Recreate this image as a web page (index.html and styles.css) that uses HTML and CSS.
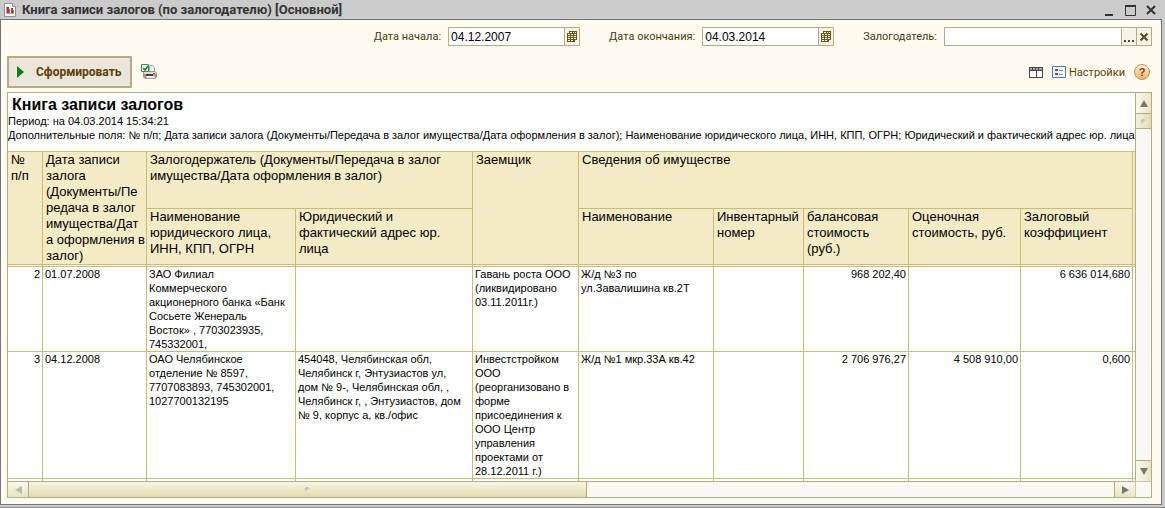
FILE: index.html
```html
<!DOCTYPE html>
<html lang="ru">
<head>
<meta charset="utf-8">
<title>Книга записи залогов</title>
<link rel="stylesheet" href="styles.css">
</head>
<body>
<div class="window">
  <header class="titlebar">
    <svg class="doc-icon" width="12" height="14" viewBox="0 0 12 14"><path d="M.5.5h8l3 3v10H.5z" fill="#fff" stroke="#7c96ae"/><path d="M8.500.5v3h3" fill="#dde6ee" stroke="#7c96ae"/><path d="M2 3h1v7H2zM2 10h8v1H2z" fill="#a8a8a8"/><path d="M3 4h2v6H3zM7 5h2v5H7z" fill="#d8281c"/><path d="M5 6h1v4H5zM9 7h1v3H9z" fill="#5ba04b"/></svg>
    <h1 class="title">Книга записи залогов (по залогодателю) [Основной]</h1>
    <div class="window-buttons">
      <button class="wbtn" aria-label="Свернуть"><svg width="12" height="12"><path d="M2 10h8v2H2z" fill="#333"/></svg></button>
      <button class="wbtn" aria-label="Развернуть"><svg width="12" height="12"><path d="M1.500 1.500h10v10h-10z" fill="none" stroke="#333"/><path d="M1 1h11v2H1z" fill="#333"/></svg></button>
      <button class="wbtn" aria-label="Закрыть"><svg width="12" height="12"><path d="M2 2l8 8M10 2l-8 8" stroke="#333" stroke-width="2"/></svg></button>
    </div>
  </header>
  <main class="client">
    <form class="filters">
      <div class="field">
        <label for="from">Дата начала:</label>
        <div class="combo date"><input id="from" type="text" value="04.12.2007"><button type="button" class="pick" aria-label="Календарь"><svg width="12" height="12"><path d="M3 0h8v9h-2v2H1V2h2z" fill="#735213"/><path d="M4 1h2v1H4zM7 1h1v1H7zM9 1h1v1H9zM2 3h2v1H2zM5 3h2v1H5zM8 3h2v1H8zM2 5h2v1H2zM5 5h2v1H5zM8 5h2v1H8zM2 7h2v1H2zM5 7h2v1H5zM8 7h2v1H8zM2 9h2v1H2zM5 9h2v1H5z" fill="#fff"/></svg></button></div>
      </div>
      <div class="field">
        <label for="to">Дата окончания:</label>
        <div class="combo date"><input id="to" type="text" value="04.03.2014"><button type="button" class="pick" aria-label="Календарь"><svg width="12" height="12"><path d="M3 0h8v9h-2v2H1V2h2z" fill="#735213"/><path d="M4 1h2v1H4zM7 1h1v1H7zM9 1h1v1H9zM2 3h2v1H2zM5 3h2v1H5zM8 3h2v1H8zM2 5h2v1H2zM5 5h2v1H5zM8 5h2v1H8zM2 7h2v1H2zM5 7h2v1H5zM8 7h2v1H8zM2 9h2v1H2zM5 9h2v1H5z" fill="#fff"/></svg></button></div>
      </div>
      <div class="field">
        <label for="pledger">Залогодатель:</label>
        <div class="combo pledger"><input id="pledger" type="text"><button type="button" class="pick" aria-label="Выбрать"><svg width="12" height="12"><path d="M1 9h2v2H1zM5 9h2v2H5zM9 9h2v2H9z" fill="#5c4513"/></svg></button><button type="button" class="pick" aria-label="Очистить"><svg width="12" height="12"><path d="M2.500 2.500l7 7M9.500 2.500l-7 7" stroke="#5c4513" stroke-width="2"/></svg></button></div>
      </div>
    </form>
    <div class="toolbar">
      <button class="run"><svg width="7" height="12"><path d="M0 0l7 6-7 6z" fill="#108010"/></svg>Сформировать</button>
      <button class="tool print" aria-label="Печать"><svg width="16" height="16"><path d="M8.500 1.500h3l2 2v4h-5z" fill="#eaf2fa" stroke="#8fa6bd"/><path d="M2 8l2-1h10l2 2v4l-2 2H4l-2-2z" fill="#a5978f"/><path d="M3 8h11l1 2H3z" fill="#e2d8cf"/><path d="M5 10h7v2H5z" fill="#463c38"/><path d="M5 12h8l1 2H6z" fill="#f4f4f4"/><path d="M12 9h2v1h-2z" fill="#e25a32"/><path d="M.5.5h7v7h-7z" fill="#fff" stroke="#458d45"/><path d="M2 4l2 2 3-4" fill="none" stroke="#188018" stroke-width="1.500"/></svg></button>
      <div class="tools-right">
        <button class="tool" aria-label="Таблица"><svg width="14" height="11"><path d="M0 0h14v11H0z" fill="#444"/><path d="M1 4h6v6H1zM8 4h5v6H8z" fill="#fff"/><path d="M1 1h2v2H1zM4 1h2v2H4zM7 1h2v2H7zM10 1h3v2h-3z" fill="#aaa"/></svg></button>
        <button class="tool settings"><svg width="14" height="12"><path d="M.5.5h13v11H.5z" fill="#f5f8ff" stroke="#5573b5"/><path d="M3 3h3v2H3zM3 7h3v2H3z" fill="#3d5ba5"/><path d="M7 4.500h4M7 8.500h4" stroke="#8493b5"/></svg>Настройки</button>
        <button class="help" aria-label="Справка">?</button>
      </div>
    </div>
    <section class="report">
      <div class="sheet">
        <div class="report-head">
          <h2>Книга записи залогов</h2>
          <p>Период: на 04.03.2014 15:34:21</p>
          <p>Дополнительные поля: № п/п; Дата записи залога (Документы/Передача в залог имущества/Дата оформления в залог); Наименование юридического лица, ИНН, КПП, ОГРН; Юридический и фактический адрес юр. лица</p>
        </div>
        <table class="grid">
          <colgroup><col class="c-num"><col class="c-date"><col class="c-name"><col class="c-addr"><col class="c-debtor"><col class="c-item"><col class="c-inv"><col class="c-bal"><col class="c-est"><col class="c-est"><col class="c-rest"></colgroup>
          <thead>
            <tr class="h-top">
              <th rowspan="2">№<br>п/п</th>
              <th rowspan="2">Дата записи<br>залога<br>(Документы/Пе<br>редача в залог<br>имущества/Дат<br>а оформления в<br>залог)</th>
              <th colspan="2">Залогодержатель (Документы/Передача в залог<br>имущества/Дата оформления в залог)</th>
              <th rowspan="2">Заемщик</th>
              <th colspan="5">Сведения об имуществе</th>
              <th rowspan="2"></th>
            </tr>
            <tr class="h-sub">
              <th>Наименование<br>юридического лица,<br>ИНН, КПП, ОГРН</th>
              <th>Юридический и<br>фактический адрес юр.<br>лица</th>
              <th>Наименование</th>
              <th>Инвентарный<br>номер</th>
              <th>балансовая<br>стоимость<br>(руб.)</th>
              <th>Оценочная<br>стоимость, руб.</th>
              <th>Залоговый<br>коэффициент</th>
            </tr>
            <tr class="strip"><td></td><td></td><td></td><td></td><td></td><td></td><td></td><td></td><td></td><td></td><td></td></tr>
          </thead>
          <tbody>
            <tr class="r-short">
              <td class="num">2</td><td>01.07.2008</td>
              <td>ЗАО Филиал<br>Коммерческого<br>акционерного банка «Банк<br>Сосьете Женераль<br>Восток» , 7703023935,<br>745332001,</td>
              <td></td><td>Гавань роста ООО<br>(ликвидировано<br>03.11.2011г.)</td><td>Ж/д №3 по<br>ул.Завалишина кв.2Т</td><td></td>
              <td class="num">968 202,40</td><td></td><td class="num">6 636 014,680</td><td></td>
            </tr>
            <tr class="r-tall">
              <td class="num">3</td><td>04.12.2008</td>
              <td>ОАО Челябинское<br>отделение № 8597,<br>7707083893, 745302001,<br>1027700132195</td>
              <td>454048, Челябинская обл,<br>Челябинск г, Энтузиастов ул,<br>дом № 9-, Челябинская обл, ,<br>Челябинск г, , Энтузиастов, дом<br>№ 9, корпус а, кв./офис</td>
              <td>Инвестстройком<br>ООО<br>(реорганизовано в<br>форме<br>присоединения к<br>ООО Центр<br>управления<br>проектами от<br>28.12.2011 г.)</td>
              <td>Ж/д №1 мкр.33А кв.42</td><td></td>
              <td class="num">2 706 976,27</td><td class="num">4 508 910,00</td><td class="num">0,600</td><td></td>
            </tr>
            <tr class="r-next"><td></td><td></td><td></td><td></td><td></td><td></td><td></td><td></td><td></td><td></td><td></td></tr>
          </tbody>
        </table>
      </div>
      <div class="vscroll">
        <button class="arrow-v" aria-label="Вверх"><svg width="8" height="7"><path d="M4 0l4 7H0z" fill="#777"/></svg></button>
        <div class="thumb-v"><i class="grip"></i></div>
        <div class="track"></div>
        <button class="arrow-v down" aria-label="Вниз"><svg width="8" height="7"><path d="M0 0h8l-4 7z" fill="#777"/></svg></button>
      </div>
      <div class="hscroll">
        <button class="arrow-h" aria-label="Влево"><svg width="7" height="8"><path d="M7 0v8L0 4z" fill="#bdbbab"/></svg></button>
        <div class="thumb-h"><i class="grip"></i></div>
        <div class="track"></div>
        <button class="arrow-h right" aria-label="Вправо"><svg width="7" height="8"><path d="M0 0v8l7-4z" fill="#777"/></svg></button>
      </div>
      <div class="corner"></div>
    </section>
  </main>
</div>
</body>
</html>
```
FILE: styles.css
```css
* { box-sizing: border-box; }
body { margin: 0; font-family: "Liberation Sans", Arial, sans-serif; font-size: 11px; color: #000; }
button { margin: 0; padding: 0; border: 0; background: none; font: inherit; color: inherit; display: flex; align-items: center; justify-content: center; }
svg { display: block; flex: none; }

.window { height: 100vh; display: flex; flex-direction: column; background: #cbcbcb; padding: 0 3px 2px 0; border-bottom: 1px solid #8a8a8a; }
.titlebar { height: 19px; flex: none; display: flex; align-items: center; gap: 6px; padding: 0 5px 0 4px; }
.title { margin: 0; flex: 1; font: bold 13px/19px Roboto, sans-serif; color: #333; white-space: nowrap; }
.window-buttons { display: flex; gap: 9px; }
.wbtn { width: 12px; height: 14px; }

.client { flex: 1; min-height: 0; display: flex; flex-direction: column; background: #fffbf0; border: 1px solid #75757b; padding: 7px 9px 6px 6px; font-family: Roboto, sans-serif; color: #4a3a10; }
.filters { display: flex; justify-content: flex-end; gap: 29px; }
.field { display: flex; align-items: center; gap: 7px; font-size: 11px; }
.combo { display: flex; height: 19px; border: 1px solid #b3ac86; background: #fff; }
.date { width: 132px; }
.pledger { width: 208px; }
.combo input { flex: 1; min-width: 0; border: 0; padding: 0 2px; background: none; font: 12px "Liberation Sans", Arial, sans-serif; color: #000; outline: 0; }
.pick { width: 15px; border-left: 1px solid #b3ac86; background: #f7f3e9; }

.toolbar { display: flex; align-items: center; margin: 10px 0 4px; height: 32px; }
.run { height: 32px; padding: 0 8px; gap: 12px; border: 2px solid #b3ac86; background: #ece5dc; font-size: 12px; font-weight: bold; color: #5a4208; }
.print { margin-left: 9px; }
.tools-right { margin-left: auto; display: flex; align-items: center; gap: 9px; padding-right: 2px; }
.settings { gap: 3px; font-size: 11px; color: #5a4208; }
.help { width: 16px; height: 16px; border: 1px solid #b3956a; border-radius: 50%; background: linear-gradient(#fff0d8, #fbb45c); font: bold 11px "Liberation Sans", Arial, sans-serif; color: #6b4a18; }

.report { flex: 1; min-height: 0; display: grid; grid-template-columns: minmax(0, 1fr) 16px; grid-template-rows: minmax(0, 1fr) 16px; border: 1px solid #b3ac86; background: #fff; font-family: "Liberation Sans", Arial, sans-serif; color: #000; }
.sheet { overflow: hidden; }
.report-head { height: 59px; padding-top: 2px; border-bottom: 1px solid #c8bc78; }
.report-head h2 { margin: 0; padding-left: 4px; font-size: 16px; line-height: 19px; }
.report-head p { margin: 0; line-height: 14px; white-space: nowrap; }

.grid { table-layout: fixed; width: 1160px; border-collapse: separate; border-spacing: 0; }
.c-num { width: 35px; } .c-date { width: 104px; } .c-name { width: 149px; } .c-addr { width: 177px; } .c-debtor { width: 106px; }
.c-item { width: 135px; } .c-inv { width: 90px; } .c-bal { width: 105px; } .c-est { width: 112px; } .c-rest { width: 35px; }
.grid th, .grid td { border: solid #c8bc78; border-width: 0 1px 1px 0; text-align: left; vertical-align: top; font-weight: normal; white-space: nowrap; }
.grid th { background: #f3ebc6; padding: 0 3px; font-size: 13px; line-height: 16px; }
.grid td { padding: 0 2px; line-height: 14px; }
.grid td.num { text-align: right; }
.h-top { height: 57px; }
.h-sub { height: 56px; }
.grid .strip td { height: 2px; padding: 0; line-height: 0; background: #fbf7e4; }
.r-short { height: 85px; }
.r-tall { height: 127px; }
.r-next { height: 20px; }

.vscroll { display: flex; flex-direction: column; border-left: 1px solid #b3ac86; }
.hscroll { display: flex; border-top: 1px solid #b3ac86; }
.corner { border: solid #cfc9a8; border-width: 1px 0 0 1px; background: #faf8f3; }
.track { flex: 1; background: #faf8f3; }
.arrow-v { height: 21px; border-bottom: 1px solid #b3ac86; background: linear-gradient(90deg, #faf8ec, #eae4c4); }
.arrow-v.down { border-bottom: 0; border-top: 1px solid #b3ac86; }
.thumb-v { height: 15px; display: flex; align-items: center; justify-content: center; border-bottom: 1px solid #b3ac86; background: linear-gradient(90deg, #f6f2dc, #e2daae); }
.arrow-h { width: 21px; border-right: 1px solid #b3ac86; background: linear-gradient(#faf8ec, #eae4c4); }
.arrow-h.right { border-right: 0; border-left: 1px solid #b3ac86; }
.thumb-h { flex: 0 0 49.5%; display: flex; align-items: center; justify-content: center; border-right: 1px solid #b3ac86; background: linear-gradient(#f8f5e4, #e2daae); }
.grip { width: 5px; height: 5px; border-radius: 50%; background: linear-gradient(135deg, #aaa58a, #fff); }
```
